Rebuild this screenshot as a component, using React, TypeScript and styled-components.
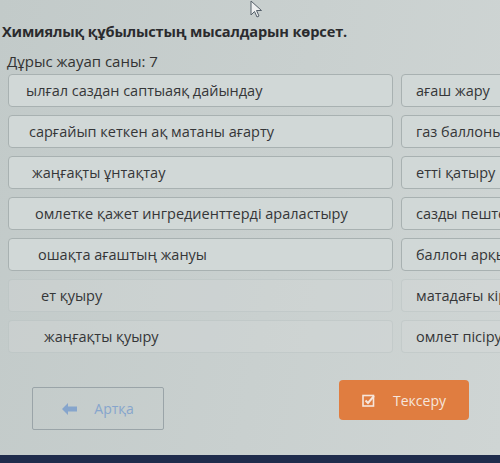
import React from 'react'
import styled, { createGlobalStyle } from 'styled-components'

const GlobalStyle = createGlobalStyle`
    html, body {
        margin: 0;
        padding: 0;
        background: #c6cdcc;
    }
    body {
        font-family: "Open Sans", "Noto Sans", "DejaVu Sans", sans-serif;
    }
`

const Page = styled.div`
    position: relative;
    width: 500px;
    height: 463px;
    overflow: hidden;
    display: flex;
    flex-direction: column;
    background: linear-gradient(100deg, #c2cac9 0%, #c9d0cf 55%, #cfd5d4 100%);
`

const Content = styled.div`
    flex: 1;
    padding: 21px 0 0 8px;
    display: flex;
    flex-direction: column;
`

const Title = styled.h1`
    margin: 0 0 0 -6px;
    font-size: 14.6px;
    line-height: 20px;
    font-weight: 700;
    color: #2b2b2e;
    letter-spacing: -0.15px;
`

const Counter = styled.div`
    margin: 10px 0 0 -1px;
    font-size: 15px;
    line-height: 20px;
    color: #333;
`

const Grid = styled.div`
    margin-top: 3px;
    display: grid;
    grid-template-columns: 385px 140px;
    column-gap: 8px;
    row-gap: 8px;
`

const Item = styled.div<{ $faint?: boolean; $indent: number }>`
    height: 33px;
    box-sizing: border-box;
    display: flex;
    align-items: center;
    padding-left: ${p => p.$indent}px;
    border: 1px solid ${p => (p.$faint ? 'rgba(160,170,170,0.25)' : '#a8b1b1')};
    border-radius: 4px;
    background: ${p => (p.$faint ? 'rgba(214,220,219,0.3)' : '#d1d8d7')};
    font-size: 14.5px;
    color: #353638;
    white-space: nowrap;
    overflow: hidden;
`

const Actions = styled.div`
    margin-top: 27px;
    padding-left: 24px;
    display: flex;
    align-items: flex-start;
    gap: 175px;
`

const BackButton = styled.button`
    margin-top: 7px;
    width: 132px;
    height: 43px;
    display: flex;
    align-items: center;
    justify-content: center;
    gap: 16px;
    border: 1px solid #9aa4a8;
    border-radius: 2px;
    background: transparent;
    color: #86a5cc;
    font-family: inherit;
    font-size: 14px;
`

const CheckButton = styled.button`
    width: 130px;
    height: 40px;
    display: flex;
    align-items: center;
    justify-content: center;
    gap: 18px;
    border: none;
    border-radius: 4px;
    background: #e07d40;
    color: #f6e6dc;
    font-family: inherit;
    font-size: 14px;
`

const Bezel = styled.div`
    height: 8px;
    background: #1f2c4c;
`

const Cursor = styled.svg`
    position: absolute;
    left: 250px;
    top: 0;
`

const left = [
    'ылғал саздан саптыаяқ дайындау',
    'сарғайып кеткен ақ матаны ағарту',
    'жаңғақты ұнтақтау',
    'омлетке қажет ингредиенттерді араластыру',
    'ошақта ағаштың жануы',
    'ет қуыру',
    'жаңғақты қуыру',
]

const right = [
    'ағаш жару',
    'газ баллонының жарылуы',
    'етті қатыру',
    'сазды пеште күйдіру',
    'баллон арқылы газ тасымалдау',
    'матадағы кірді кетіру',
    'омлет пісіру',
]

const App: React.FC = () => (
    <Page>
        <GlobalStyle />
        <Content>
            <Title>Химиялық құбылыстың мысалдарын көрсет.</Title>
            <Counter>Дұрыс жауап саны: 7</Counter>
            <Grid>
                {left.map((text, i) => (
                    <React.Fragment key={i}>
                        <Item $indent={17 + i * 3} $faint={i > 4}>{text}</Item>
                        <Item $indent={14} $faint={i > 4}>{right[i]}</Item>
                    </React.Fragment>
                ))}
            </Grid>
            <Actions>
                <BackButton>
                    <svg width="16" height="12" viewBox="0 0 16 12">
                        <path d="M0 6 L6 0 L6 3.5 L15 3.5 L15 8.5 L6 8.5 L6 12 Z" fill="#86a5cc" />
                    </svg>
                    Артқа
                </BackButton>
                <CheckButton>
                    <svg width="13" height="13" viewBox="0 0 13 13">
                        <rect x="1" y="1.5" width="10.5" height="10.5" fill="none" stroke="#f6e6dc" strokeWidth="1.6" />
                        <path d="M3.5 6.5 L6 9 L12 2" fill="none" stroke="#f6e6dc" strokeWidth="2" />
                    </svg>
                    Тексеру
                </CheckButton>
            </Actions>
        </Content>
        <Bezel />
        <Cursor width="14" height="20" viewBox="0 0 14 20">
            <path d="M1 1 L1 15 L4.5 11.5 L7 17 L9 16 L6.5 10.5 L11.5 10.5 Z" fill="#eef0f0" stroke="#55606a" strokeWidth="1" />
        </Cursor>
    </Page>
)

export default App
